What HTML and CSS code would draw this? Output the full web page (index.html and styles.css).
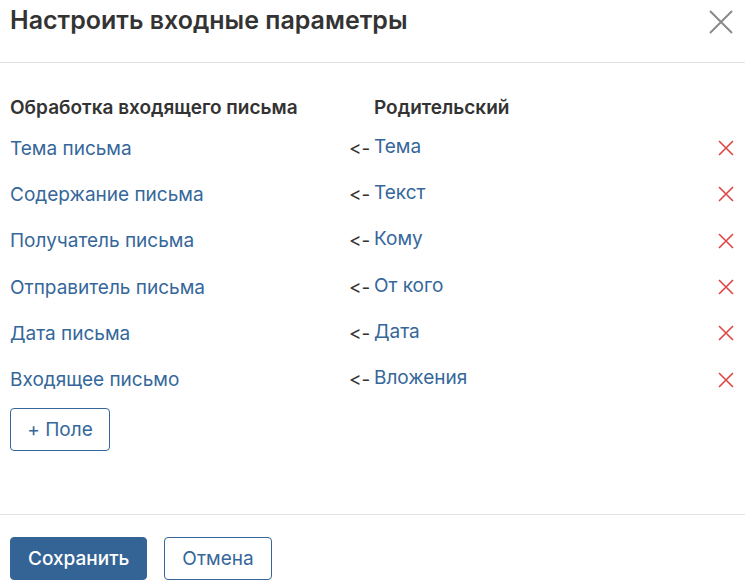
FILE: index.html
```html
<!DOCTYPE html>
<html lang="ru">
<head>
<meta charset="utf-8">
<link rel="stylesheet" href="styles.css">
</head>
<body>
<div class="dialog">
  <div class="head">
    <h1 class="title">Настроить входные параметры</h1>
    <button class="close" aria-label="Закрыть">
      <svg width="24" height="24" viewBox="0 0 24 24"><path d="M1 1L23 23M23 1L1 23" stroke="#8a8a8a" stroke-width="2" fill="none"/></svg>
    </button>
  </div>
  <div class="body">
    <div class="row hdr">
      <div class="c1">Обработка входящего письма</div>
      <div class="c2"></div>
      <div class="c3">Родительский</div>
    </div>
    <div class="row"><div class="c1 link">Тема письма</div><div class="c2">&lt;-</div><div class="c3 link">Тема</div><div class="del"><svg width="16" height="16" viewBox="0 0 16 16"><path d="M1 1L15 15M15 1L1 15" stroke="#e04545" stroke-width="1.6"/></svg></div></div>
    <div class="row"><div class="c1 link">Содержание письма</div><div class="c2">&lt;-</div><div class="c3 link">Текст</div><div class="del"><svg width="16" height="16" viewBox="0 0 16 16"><path d="M1 1L15 15M15 1L1 15" stroke="#e04545" stroke-width="1.6"/></svg></div></div>
    <div class="row"><div class="c1 link">Получатель письма</div><div class="c2">&lt;-</div><div class="c3 link">Кому</div><div class="del"><svg width="16" height="16" viewBox="0 0 16 16"><path d="M1 1L15 15M15 1L1 15" stroke="#e04545" stroke-width="1.6"/></svg></div></div>
    <div class="row"><div class="c1 link">Отправитель письма</div><div class="c2">&lt;-</div><div class="c3 link">От кого</div><div class="del"><svg width="16" height="16" viewBox="0 0 16 16"><path d="M1 1L15 15M15 1L1 15" stroke="#e04545" stroke-width="1.6"/></svg></div></div>
    <div class="row"><div class="c1 link">Дата письма</div><div class="c2">&lt;-</div><div class="c3 link">Дата</div><div class="del"><svg width="16" height="16" viewBox="0 0 16 16"><path d="M1 1L15 15M15 1L1 15" stroke="#e04545" stroke-width="1.6"/></svg></div></div>
    <div class="row"><div class="c1 link">Входящее письмо</div><div class="c2">&lt;-</div><div class="c3 link">Вложения</div><div class="del"><svg width="16" height="16" viewBox="0 0 16 16"><path d="M1 1L15 15M15 1L1 15" stroke="#e04545" stroke-width="1.6"/></svg></div></div>
    <button class="btn outline add">+ Поле</button>
  </div>
  <div class="foot">
    <button class="btn primary">Сохранить</button>
    <button class="btn outline">Отмена</button>
  </div>
</div>
</body>
</html>
```
FILE: styles.css
```css
* { box-sizing: border-box; }
html, body { margin: 0; padding: 0; background: #fff; }
body { font-family: Inter, "Noto Sans", sans-serif; color: #333; width: 745px; height: 588px; overflow: hidden; font-variant-ligatures: none; font-feature-settings: "calt" 0, "liga" 0; }
.dialog { display: flex; flex-direction: column; height: 588px; }
.head { height: 63px; border-bottom: 1px solid #e3e3e3; display: flex; align-items: flex-start; justify-content: space-between; padding: 0 12px 0 10px; }
.title { margin: 0; padding-top: 4px; font-size: 25px; font-weight: 600; color: #333; line-height: 32px; }
.close { background: none; border: 0; padding: 0; margin-top: 10px; width: 24px; height: 24px; cursor: pointer; }
.body { flex: 1; padding: 26px 10px 0 10px; }
.row { display: flex; align-items: center; height: 46.3px; font-size: 19px; }
.hdr { height: 36px; font-weight: 600; color: #333; font-size: 19px; }
.c1 { width: 339px; }
.c2 { width: 25px; color: #333; }
.c3 { flex: 1; }
.link { color: #35679a; }
.row .c3.link { position: relative; top: -2px; }
.del { width: 16px; height: 16px; margin-right: 1px; display: flex; }
.btn { font-family: inherit; font-size: 19px; height: 43px; border-radius: 4px; cursor: pointer; padding: 0 17px; white-space: nowrap; font-variant-ligatures: none; }
.outline { background: #fff; color: #35679a; border: 1px solid #35679a; }
.primary { background: #346496; color: #fff; border: 1px solid #346496; font-weight: 500; }
.add { margin-top: 5px; width: 100px; padding: 0; }
.foot { height: 74px; border-top: 1px solid #e3e3e3; padding: 22px 10px 0 10px; display: flex; gap: 17px; align-items: flex-start; }
```
